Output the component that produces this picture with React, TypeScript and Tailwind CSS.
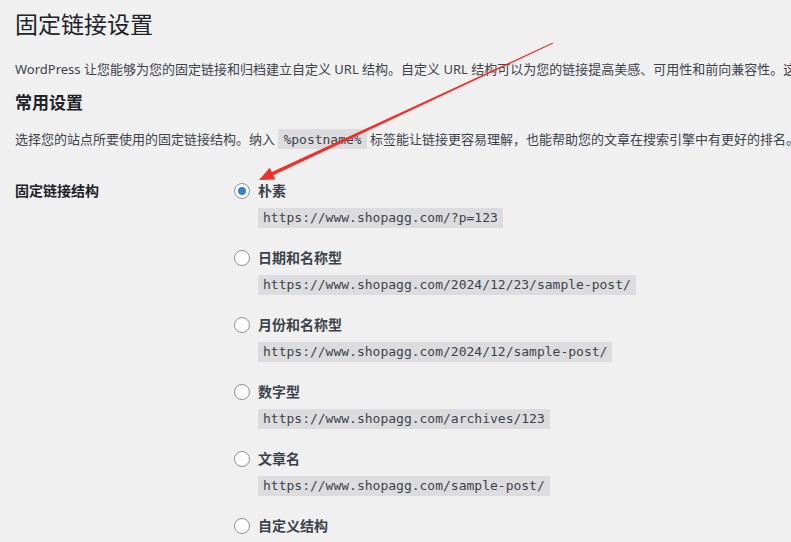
import React from "react";

const options = [
  { label: "朴素", url: "https://www.shopagg.com/?p=123", checked: true },
  { label: "日期和名称型", url: "https://www.shopagg.com/2024/12/23/sample-post/" },
  { label: "月份和名称型", url: "https://www.shopagg.com/2024/12/sample-post/" },
  { label: "数字型", url: "https://www.shopagg.com/archives/123" },
  { label: "文章名", url: "https://www.shopagg.com/sample-post/" },
  { label: "自定义结构", url: "" },
];

const sans = "font-['Noto_Sans','Noto_Sans_CJK_SC',sans-serif]";
const mono = "font-['DejaVu_Sans_Mono','Noto_Sans_CJK_SC',monospace]";

function Radio({ checked }: { checked?: boolean }) {
  return (
    <span className="flex h-4 w-4 shrink-0 items-center justify-center rounded-full border border-[#8c8f94] bg-white">
      {checked && <span className="h-2 w-2 rounded-full bg-[#3582c4]" />}
    </span>
  );
}

// the red annotation arrow drawn over the page
function Arrow() {
  const sx = 553, sy = 43, tx = 259, ty = 180;
  const len = Math.hypot(tx - sx, ty - sy);
  const ux = (tx - sx) / len, uy = (ty - sy) / len;
  const nx = -uy, ny = ux;
  const bx = tx - 15 * ux, by = ty - 15 * uy;
  const pts = [
    [sx + 0.5 * nx, sy + 0.5 * ny],
    [bx + 1.7 * nx, by + 1.7 * ny],
    [bx + 6.5 * nx, by + 6.5 * ny],
    [tx, ty],
    [bx - 6.5 * nx, by - 6.5 * ny],
    [bx - 1.7 * nx, by - 1.7 * ny],
    [sx - 0.5 * nx, sy - 0.5 * ny],
  ]
    .map((p) => p.join(","))
    .join(" ");
  return (
    <svg className="pointer-events-none absolute left-0 top-0" width="791" height="542">
      <polygon points={pts} fill="#f0302a" />
    </svg>
  );
}

export default function App() {
  return (
    <div className={`relative h-[542px] w-[791px] overflow-hidden bg-[#f0f0f1] text-[#3c434a] ${sans}`}>
      <div className="whitespace-nowrap pl-[15px]">
        <h1 className="mt-[10px] h-[29px] text-[23px] leading-[29px] text-[#1d2327]">固定链接设置</h1>
        <p className="mt-[20px] h-[20px] text-[13px] leading-[20px]">
          WordPress 让您能够为您的固定链接和归档建立自定义 URL 结构。自定义 URL 结构可以为您的链接提高美感、可用性和前向兼容性。这里有一些可供选择的标签。
        </p>
        <h2 className="mt-[13px] h-[22px] text-[17px] font-semibold leading-[22px] text-[#1d2327]">常用设置</h2>
        <p className="mt-[15px] h-[20px] text-[13px] leading-[20px]">
          选择您的站点所要使用的固定链接结构。纳入{" "}
          <code className={`bg-[#dcdcde] px-[5px] pb-[2px] pt-[3px] text-[13px] ${mono}`}>%postname%</code>{" "}
          标签能让链接更容易理解，也能帮助您的文章在搜索引擎中有更好的排名。
        </p>

        <div className="mt-[32px] flex">
          <div className="h-[20px] w-[219px] shrink-0 text-[14px] font-semibold leading-[20px] text-[#1d2327]">固定链接结构</div>
          <div className="flex flex-col gap-[20px]">
            {options.map((o) => (
              <div key={o.label}>
                <label className="flex h-[20px] items-center gap-[8px]">
                  <Radio checked={o.checked} />
                  <span className="h-[20px] text-[14px] font-semibold leading-[20px] text-[#3c434a]">{o.label}</span>
                </label>
                {o.url && (
                  <code className={`ml-[24px] mt-[7px] block h-[20px] w-fit bg-[#dcdcde] px-[5px] text-[13px] leading-[20px] ${mono}`}>
                    {o.url}
                  </code>
                )}
              </div>
            ))}
          </div>
        </div>
      </div>
      <Arrow />
    </div>
  );
}
